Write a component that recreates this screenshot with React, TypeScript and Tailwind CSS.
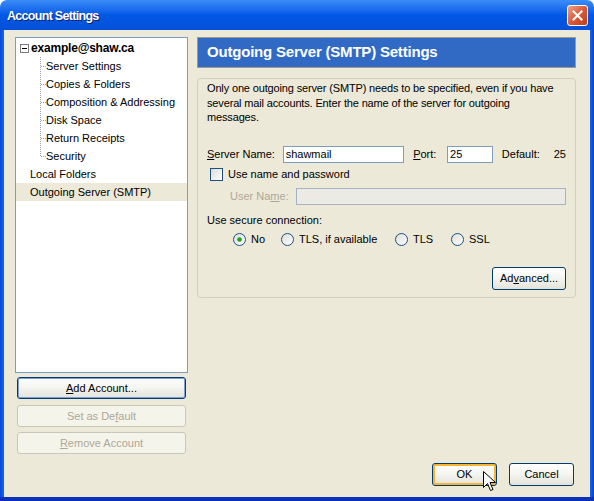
import React from "react";

function Conn({ last }: { last?: boolean }) {
  return (
    <svg width="6" height="18" className="shrink-0">
      <line x1="0.5" y1="0" x2="0.5" y2={last ? 9 : 18} stroke="#A0A0A0" strokeDasharray="1 1" />
      <line x1="1" y1="9.5" x2="6" y2="9.5" stroke="#A0A0A0" strokeDasharray="1 1" />
    </svg>
  );
}

function Radio({ checked }: { checked?: boolean }) {
  return (
    <svg width="13" height="13" className="shrink-0">
      <defs>
        <linearGradient id={checked ? "rg1" : "rg2"} x1="0" y1="0" x2="1" y2="1">
          <stop offset="0" stopColor="#DCDCD7" />
          <stop offset="1" stopColor="#FFFFFF" />
        </linearGradient>
      </defs>
      <circle cx="6.5" cy="6.5" r="6" fill={`url(#${checked ? "rg1" : "rg2"})`} stroke="#1C5180" />
      {checked && <circle cx="6.5" cy="6.5" r="2.3" fill="#21A121" />}
    </svg>
  );
}

function XPButton({
  children,
  className = "",
  disabled,
  focus,
  hover,
}: {
  children: React.ReactNode;
  className?: string;
  disabled?: boolean;
  focus?: boolean;
  hover?: boolean;
}) {
  if (disabled) {
    return (
      <div
        className={`flex items-center justify-center rounded-[3px] border border-[#C9C7BA] bg-[#F5F4EA] text-[#ACA899] ${className}`}
      >
        {children}
      </div>
    );
  }
  return (
    <div
      className={`flex items-center justify-center rounded-[3px] border border-[#003C74] ${
        focus ? "shadow-[inset_0_0_0_1px_#7FA0CF]" : ""
      } ${hover ? "shadow-[inset_0_0_0_2px_#F8B330]" : ""} bg-gradient-to-b from-[#FFFFFF] via-[#F4F4F0] to-[#E3E2DA] text-black ${className}`}
    >
      {children}
    </div>
  );
}

export default function App() {
  const treeChildren = [
    "Server Settings",
    "Copies & Folders",
    "Composition & Addressing",
    "Disk Space",
    "Return Receipts",
    "Security",
  ];
  return (
    <div className="relative w-[594px] h-[501px] overflow-hidden font-['Liberation_Sans',Arial,sans-serif] text-[11px] text-black flex flex-col">
      {/* Title bar */}
      <div className="h-[30px] shrink-0 rounded-t-[7px] bg-gradient-to-b from-[#3C8CF8] via-[#0158E6] to-[#0650D8] flex items-center pl-[7px] pr-[6px]">
        <div className="text-white font-bold text-[12.5px] tracking-[-0.7px] [text-shadow:1px_1px_0_#0A246A] flex-1 pt-[3px]">
          Account Settings
        </div>
        <div className="w-[21px] h-[21px] mt-[1px] rounded-[3px] border border-white bg-gradient-to-br from-[#F0A088] via-[#DA5A36] to-[#C2391A] flex items-center justify-center">
          <svg width="11" height="11" viewBox="0 0 11 11">
            <path d="M1.5 1.5 L9.5 9.5 M9.5 1.5 L1.5 9.5" stroke="white" strokeWidth="2" strokeLinecap="square" />
          </svg>
        </div>
      </div>

      {/* Body with frame */}
      <div className="flex-1 flex bg-[#0650D8]">
        <div className="w-[4px] shrink-0 bg-gradient-to-r from-[#0A47D6] to-[#1565F0]" />
        <div className="flex-1 min-w-0 flex flex-col bg-[#ECE9D8]">
          <div className="flex pt-[7px] pl-[11px] pr-[14px] gap-[9px]">
            {/* Left column */}
            <div className="w-[173px] shrink-0 flex flex-col">
              <div className="h-[336px] bg-white border border-[#7F9DB9] flex flex-col">
                <div className="h-[18px] mt-[1px] flex items-center pl-[4px]">
                  <div className="w-[9px] h-[9px] border border-[#7B7B7B] bg-white flex items-center justify-center">
                    <div className="w-[5px] h-[1px] bg-black" />
                  </div>
                  <span className="ml-[2px] font-bold text-[12px] tracking-[-0.2px]">example@shaw.ca</span>
                </div>
                <div className="flex flex-col pl-[24px]">
                  {treeChildren.map((t, i) => (
                    <div key={t} className="h-[18px] flex items-center">
                      <Conn last={i === treeChildren.length - 1} />
                      <span>{t}</span>
                    </div>
                  ))}
                </div>
                <div className="h-[18px] flex items-center pl-[14px]">Local Folders</div>
                <div className="h-[18px] flex items-center pl-[14px] bg-[#ECE9D8]">Outgoing Server (SMTP)</div>
              </div>
              <div className="flex flex-col px-[2px] mt-[4px] gap-[6px]">
                <XPButton focus className="h-[22px]">
                  <span>
                    <u>A</u>dd Account...
                  </span>
                </XPButton>
                <XPButton disabled className="h-[22px]">
                  <span>
                    Set as De<u>f</u>ault
                  </span>
                </XPButton>
                <XPButton disabled className="h-[22px] -mt-[1px]">
                  <span>
                    <u>R</u>emove Account
                  </span>
                </XPButton>
              </div>
            </div>

            {/* Right column */}
            <div className="flex-1 min-w-0 flex flex-col">
              <div className="h-[31px] border border-[#9C9A8C] bg-[#316AC5] flex items-center pl-[9px]">
                <span className="text-white font-bold text-[15px] tracking-[-0.2px]">Outgoing Server (SMTP) Settings</span>
              </div>
              <div className="mt-[10px] h-[220px] rounded-[4px] border border-[#D0D0BF] pl-[9px] pr-[9px] pt-[2px] flex flex-col">
                <div className="leading-[14.5px] whitespace-nowrap tracking-[-0.15px]">
                  Only one outgoing server (SMTP) needs to be specified, even if you have
                  <br />
                  several mail accounts. Enter the name of the server for outgoing
                  <br />
                  messages.
                </div>
                <div className="mt-[21px] flex items-center h-[17px]">
                  <span className="w-[76px]">
                    <u>S</u>erver Name:
                  </span>
                  <div className="w-[122px] h-[17px] bg-white border border-[#7F9DB9] pl-[2px] flex items-center">
                    shawmail
                  </div>
                  <span className="ml-[9px] w-[34px]">
                    <u>P</u>ort:
                  </span>
                  <div className="w-[46px] h-[17px] bg-white border border-[#7F9DB9] pl-[2px] flex items-center">
                    25
                  </div>
                  <span className="ml-[9px]">Default:</span>
                  <span className="ml-[14px]">25</span>
                </div>
                <div className="mt-[5px] flex items-center h-[13px] pl-[3px]">
                  <div className="w-[13px] h-[13px] border border-[#1C5180] bg-gradient-to-br from-[#DCDCD7] to-white" />
                  <span className="ml-[5px]">Use name and password</span>
                </div>
                <div className="mt-[7px] flex items-center h-[17px] pl-[23px]">
                  <span className="text-[#ACA899] w-[66px]">
                    User Na<u>m</u>e:
                  </span>
                  <div className="w-[271px] h-[17px] bg-[#EBEAE4] border border-[#A5B3C4]" />
                </div>
                <div className="mt-[9px] h-[14px] flex items-center">Use secure connection:</div>
                <div className="mt-[5px] h-[13px] flex items-center pl-[26px]">
                  <Radio checked />
                  <span className="ml-[5px] w-[30px]">No</span>
                  <Radio />
                  <span className="ml-[5px] w-[96px]">TLS, if available</span>
                  <Radio />
                  <span className="ml-[5px] w-[38px]">TLS</span>
                  <Radio />
                  <span className="ml-[5px]">SSL</span>
                </div>
                <div className="mt-[21px] flex justify-end">
                  <XPButton className="w-[74px] h-[23px]">
                    <span>
                      Ad<u>v</u>anced...
                    </span>
                  </XPButton>
                </div>
              </div>
            </div>
          </div>

          {/* Bottom buttons */}
          <div className="mt-[9px] flex justify-end pr-[16px] gap-[12px]">
            <XPButton hover className="w-[65px] h-[23px]">
              OK
            </XPButton>
            <XPButton className="w-[65px] h-[23px]">Cancel</XPButton>
          </div>
        </div>
        <div className="w-[4px] shrink-0 bg-gradient-to-r from-[#1565F0] to-[#0A3FC8]" />
      </div>
      <div className="h-[4px] shrink-0 bg-[#0A32B8]" />

      {/* Mouse cursor */}
      <svg className="absolute left-[483px] top-[471px]" width="14" height="22" viewBox="0 0 14 22">
        <path
          d="M0.5 0.5 L0.5 16.5 L4.5 12.5 L7.5 19.5 L10 18.5 L7 11.5 L12.5 11.5 Z"
          fill="white"
          stroke="black"
          strokeWidth="1"
          strokeLinejoin="miter"
        />
      </svg>
    </div>
  );
}
